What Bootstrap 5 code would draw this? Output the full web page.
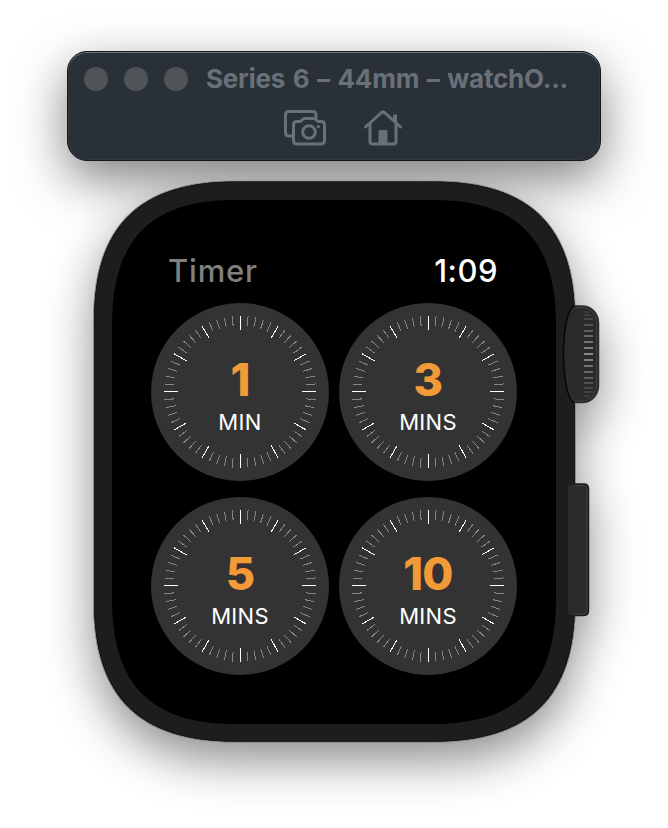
<!DOCTYPE html>
<html lang="en">
<head>
<meta charset="utf-8">
<meta name="viewport" content="width=device-width, initial-scale=1">
<title>Series 6 – 44mm</title>
<link href="https://cdn.jsdelivr.net/npm/bootstrap@5.3.0/dist/css/bootstrap.min.css" rel="stylesheet">
<style>
  body { font-family: Inter, "Liberation Sans", sans-serif; height: 828px; }
  .sim-bar { width: 534px; height: 110px; margin: 51px 0 0 67px; background: #2a3037; border: 1px solid #14171a; border-radius: 20px;
    box-shadow: inset 0 1px 0 #70767a, inset 0 0 0 1px rgba(255,255,255,.04), 0 18px 50px rgba(0,0,0,.5); color: #697079; }
  .sim-head { height: 54px; padding-left: 16px; }
  .dot { width: 24px; height: 24px; background: #4f5458; margin-right: 16px; }
  .sim-title { font-size: 26px; font-weight: 700; margin-left: 2px; letter-spacing: -.22px; word-spacing: 1.7px; line-height: 54px; }
  .sim-tools { gap: 37px; padding-left: 216px; padding-top: 4px; }
  .watch { width: 481px; height: 561px; margin: 20px 0 0 94px; }
  .watch-case { left: -94px; top: -181px; overflow: visible; filter: drop-shadow(0 18px 24px rgba(0,0,0,.45)); }
  .watch-face { width: 366px; margin-left: 57px; padding-top: 71px; }
  .status { height: 38px; font-size: 31px; line-height: 38px; padding: 0 19px 0 17px; }
  .app-name { color: #808080; letter-spacing: .8px; font-weight: 500; }
  .clock { letter-spacing: .5px; }
  .dials { display: grid; grid-template-columns: 178px 178px; gap: 16px 10px; margin-top: 13px; }
  .dial { width: 178px; height: 178px; background: #333; border: 0; padding: 0; color: #fff; }
  .dial svg { inset: 0; }
  .num { font-size: 45px; font-weight: 800; line-height: 50px; color: #f29a38; margin-top: 52px; letter-spacing: -.8px; }
  .unit { font-size: 22px; line-height: 28px; margin-top: 3px; letter-spacing: .3px; }
</style>
</head>
<body class="bg-white m-0 overflow-hidden d-flex flex-column align-items-start">

<header class="sim-bar flex-shrink-0">
  <div class="sim-head d-flex align-items-center">
    <span class="dot rounded-circle"></span><span class="dot rounded-circle"></span><span class="dot rounded-circle"></span>
    <span class="sim-title text-nowrap">Series 6 – 44mm – watchO...</span>
  </div>
  <div class="sim-tools d-flex">
    <svg width="42" height="36" viewBox="0 0 42 36" fill="none" stroke="currentColor" stroke-width="3" stroke-linejoin="round">
      <path d="M8 26H5Q1.500 26 1.500 22.500V5Q1.500 1.500 5 1.500H28.500Q32 1.500 32 5V8"/>
      <path d="M13 11.500H16.500L18.500 9.500Q19.500 8.500 21 8.500H29.500Q31 8.500 32 9.500L34 11.500H37Q40.500 11.500 40.500 15V30.500Q40.500 34 37 34H13Q9.500 34 9.500 30.500V15Q9.500 11.500 13 11.500Z"/>
      <circle cx="25" cy="22" r="6.300"/><circle cx="34.300" cy="16.700" r="1.600" fill="currentColor" stroke="none"/>
    </svg>
    <svg width="40" height="36" viewBox="0 0 40 36" fill="none" stroke="currentColor" stroke-width="3" stroke-linejoin="round" stroke-linecap="round">
      <path d="M2.500 17L18 3Q20 1.300 22 3L37.500 17"/>
      <path d="M7 14.500V31.500Q7 34 9.500 34H30.500Q33 34 33 31.500V14.500"/>
      <path d="M30 5.500Q30 4.500 31 4.500H33Q34 4.500 34 5.500V14L30 10.500Z" fill="currentColor" stroke="none"/>
      <path d="M15.500 34V21.500Q15.500 20 17 20H23Q24.500 20 24.500 21.500V34Z" fill="currentColor" stroke="none"/>
    </svg>
  </div>
</header>

<main class="watch position-relative flex-shrink-0">
  <svg class="watch-case position-absolute" width="668" height="828" viewBox="0 0 668 828">
    <path d="M93.500 320C93.500 225.500 139.500 181 235 181H434C529.500 181 575.500 225.500 575.500 320V603C575.500 697.500 529.500 742.300 434 742.300H235C139.500 742.300 93.500 697.500 93.500 603Z" fill="#1d1d1d" stroke="#909090"/>
    <path d="M94.500 320C94.500 226.500 140.500 182 235 182H434C528.500 182 574.500 226.500 574.500 320V603C574.500 696.500 528.500 741 434 741H235C140.500 741 94.500 696.500 94.500 603Z" fill="none" stroke="#161616"/>
    <path d="M112 325C112 240 150 200 235 200H433C518 200 556 240 556 325V599C556 684 518 724 433 724H235C150 724 112 684 112 599Z" fill="#000"/>
    <path d="M574 306H582C592 306 598.500 314 598.500 323V385C598.500 395 592 402.500 582 402.500H574C567 400 563.500 375 563.500 354S567 308 574 306Z" fill="#2a2a2a"/>
    <path d="M574 306H582C592 306 598.500 314 598.500 323V385C598.500 395 592 402.500 582 402.500H574" fill="none" stroke="#2e2e2e" stroke-width="1.500"/>
    <path d="M574 402.500C567 400 563.500 375 563.500 354S567 308 574 306" fill="none" stroke="#060606" stroke-width="1.500"/>
    <path d="M575 307.500H582C591 307.500 596.500 315 596.500 323V385C596.500 393 591 401 582 401H575" fill="none" stroke="#484848" stroke-width=".8"/>
    <g id="grooves" fill="#999" shape-rendering="crispEdges"></g>
    <path d="M568 484H584Q588.500 484 588.500 489V610Q588.500 615.500 584 615.500H568Z" fill="#2b2b2b"/>
    <path d="M568 484H584Q588.500 484 588.500 489V610Q588.500 615.500 584 615.500H568" fill="none" stroke="#1c1c1c" stroke-width="1.500"/>
    <path d="M574 485.500H583Q587 485.500 587 490V609Q587 614 583 614H574" fill="none" stroke="#464646" stroke-width=".8"/>
  </svg>

  <section class="watch-face position-relative">
    <div class="status d-flex justify-content-between">
      <span class="app-name">Timer</span>
      <span class="text-white fw-medium clock">1:09</span>
    </div>
    <div class="dials">
      <button class="dial rounded-circle position-relative d-flex flex-column align-items-center"><span class="num">1</span><span class="unit">MIN</span></button>
      <button class="dial rounded-circle position-relative d-flex flex-column align-items-center"><span class="num">3</span><span class="unit">MINS</span></button>
      <button class="dial rounded-circle position-relative d-flex flex-column align-items-center"><span class="num">5</span><span class="unit">MINS</span></button>
      <button class="dial rounded-circle position-relative d-flex flex-column align-items-center"><span class="num">10</span><span class="unit">MINS</span></button>
    </div>
  </section>
</main>

<script src="https://cdn.jsdelivr.net/npm/bootstrap@5.3.0/dist/js/bootstrap.bundle.min.js"></script>
<script>
  // Sixty ticks around each dial, every fifth one long and bright.
  let ticks = '';
  for (let i = 0; i < 60; i++) {
    const major = i % 5 === 0, a = i * Math.PI / 30, s = Math.sin(a), c = Math.cos(a);
    const r = major ? 62 : 66;
    ticks += `<line x1="${(89.1 + 76 * s).toFixed(2)}" y1="${(88.9 - 76 * c).toFixed(2)}" x2="${(89.1 + r * s).toFixed(2)}" y2="${(88.9 - r * c).toFixed(2)}" stroke="${major ? '#fff' : '#858585'}"/>`;
  }
  document.querySelectorAll('.dial').forEach(d => d.insertAdjacentHTML('beforeend',
    `<svg class="position-absolute" width="178" height="178" shape-rendering="crispEdges">${ticks}</svg>`));

  // Crown grooves, brightest in the middle.
  const ys = [311, 314, 318, 324, 330, 335, 341, 347, 353, 359, 365, 371, 377, 382, 387, 391, 395];
  document.getElementById('grooves').innerHTML = ys.map(y =>
    `<rect x="584" y="${y}" width="${Math.abs(y - 353) > 38 ? 6 : 9}" height="2" opacity="${(0.85 - Math.abs(y - 353) / 60).toFixed(2)}"/>`).join('');
</script>
</body>
</html>
